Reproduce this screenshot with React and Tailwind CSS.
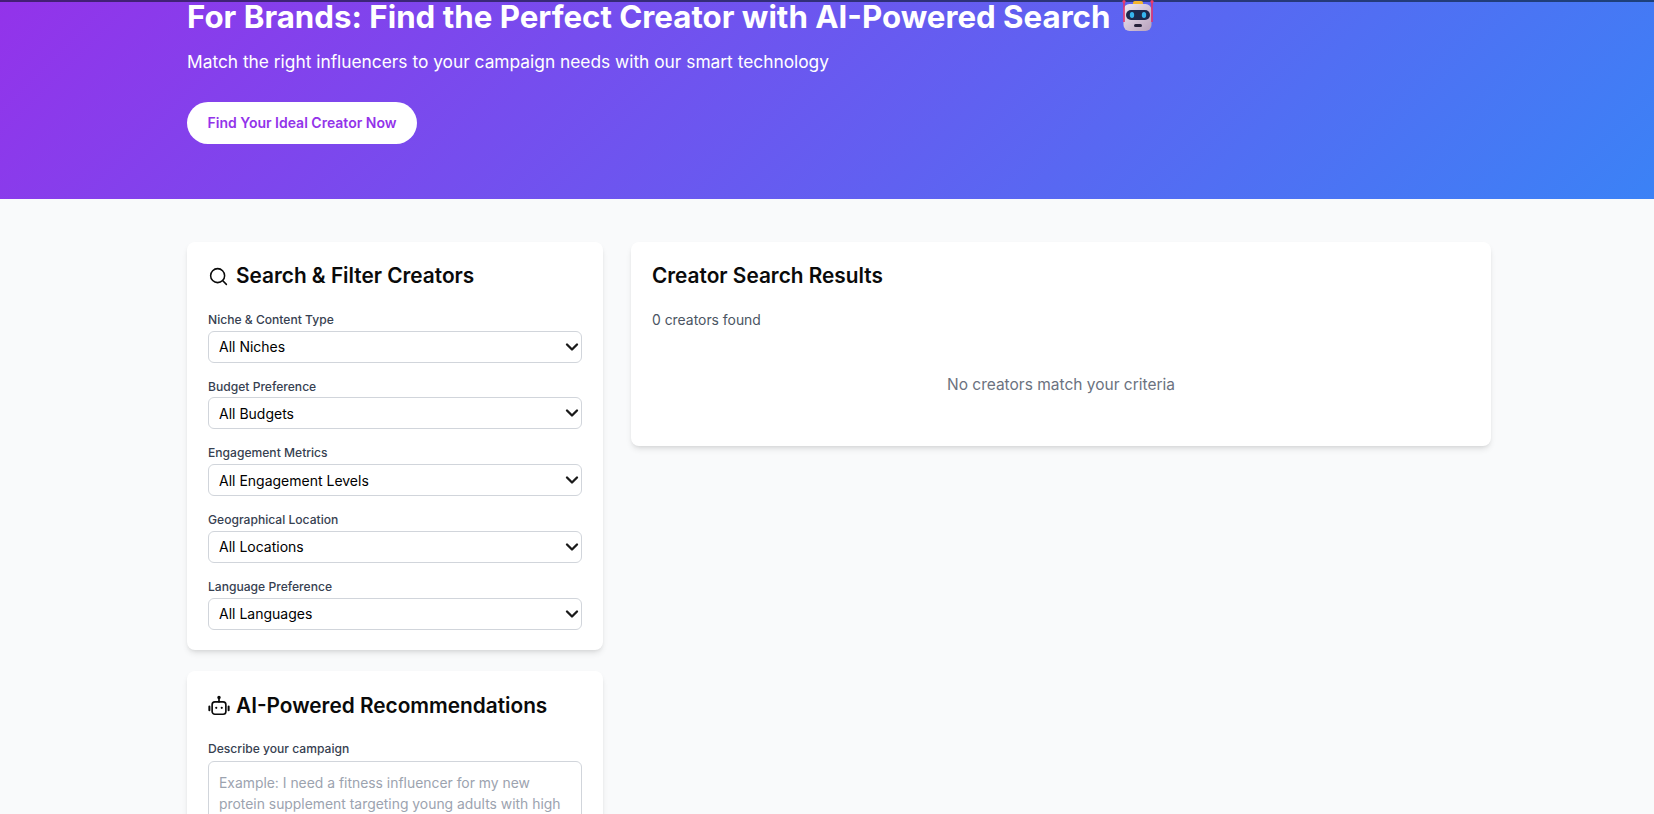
import React from 'react'
import { Search, ChevronDown } from 'lucide-react'

const filters = [
  { label: 'Niche & Content Type', value: 'All Niches' },
  { label: 'Budget Preference', value: 'All Budgets' },
  { label: 'Engagement Metrics', value: 'All Engagement Levels' },
  { label: 'Geographical Location', value: 'All Locations' },
  { label: 'Language Preference', value: 'All Languages' },
]

const RobotEmoji = () => (
  <svg viewBox="0 0 32 32" className="w-[32px] h-[32px] shrink-0 ml-[12px] -my-[1px] -translate-y-[1px]">
    <defs>
      <linearGradient id="face" x1="0" y1="0" x2="1" y2="1">
        <stop offset="0" stopColor="#efe9f4" />
        <stop offset="1" stopColor="#b7a0bb" />
      </linearGradient>
    </defs>
    <rect x="11" y="1" width="10" height="4" rx="1.8" fill="#f5b52e" />
    <rect x="1.5" y="4" width="28" height="27" rx="6" fill="url(#face)" />
    <path d="M2 2v20M30 2v20" stroke="#e0326f" strokeWidth="1.6" fill="none" />
    <circle cx="2" cy="1.6" r="1.6" fill="#ee3b6a" />
    <circle cx="30" cy="1.6" r="1.6" fill="#ee3b6a" />
    <rect x="4" y="10" width="24" height="10" rx="5" fill="#1d2a4d" />
    <ellipse cx="10" cy="15" rx="2.2" ry="3" fill="#35b6ee" />
    <ellipse cx="22" cy="15" rx="2.2" ry="3" fill="#35b6ee" />
    <rect x="12" y="24" width="8" height="3" rx="1.5" fill="#26213a" />
  </svg>
)

const RobotIcon = () => (
  <svg viewBox="0 0 24 24" fill="none" stroke="currentColor" strokeWidth="1.8" strokeLinecap="round" className="w-[22px] h-[22px] shrink-0">
    <circle cx="12" cy="2.6" r="1" />
    <path d="M12 4v3.5" />
    <rect x="4.5" y="7.5" width="15" height="13.5" rx="3" />
    <path d="M1.5 12.5v4M22.5 12.5v4" strokeWidth="2.2" />
    <circle cx="9" cy="14" r="1.2" fill="currentColor" stroke="none" />
    <circle cx="15" cy="14" r="1.2" fill="currentColor" stroke="none" />
  </svg>
)

const App = () => {
  return (
    <div className="h-[814px] overflow-hidden bg-[#f9fafb] font-['Inter',sans-serif]">
      <div className="h-[199px] pl-[187px] border-t-2 border-black/50 bg-[linear-gradient(135deg,#9333ea,#3b82f6)]">
        <h1 className="flex items-center text-[31.25px] leading-[30px] font-bold text-white">
          For Brands: Find the Perfect Creator with AI-Powered Search
          <RobotEmoji />
        </h1>
        <p className="mt-[16px] text-[17.33px] leading-[28px] text-white">
          Match the right influencers to your campaign needs with our smart technology
        </p>
        <button className="mt-[26px] w-[230px] h-[42px] pb-[2px] rounded-full bg-white text-[14px] font-semibold text-[#9333ea]">
          Find Your Ideal Creator Now
        </button>
      </div>

      <div className="pt-[43px] pl-[187px] grid grid-cols-[416px_860px] gap-[28px] items-start">
        <div className="flex flex-col gap-[21px]">
          <div className="h-[408px] bg-white rounded-lg shadow-md p-[21px]">
            <h2 className="flex items-center gap-[7px] text-[20.8px] leading-[26px] font-semibold text-[#0a0a0a]">
              <Search className="w-[21px] h-[21px]" strokeWidth={1.75} />
              Search &amp; Filter Creators
            </h2>
            <div className="mt-[21px] flex flex-col gap-[14px]">
              {filters.map((f) => (
                <div key={f.label}>
                  <label className="block text-[12.1px] leading-[20.7px] font-medium text-[#374151]">{f.label}</label>
                  <div className="relative">
                    <select className="block w-full h-[32px] pl-[10px] appearance-none border border-[#d1d5db] rounded-md bg-white text-[14px] text-black">
                      <option>{f.value}</option>
                    </select>
                    <ChevronDown className="absolute right-0 top-[6px] w-[20px] h-[20px] text-[#1a1a1a] pointer-events-none" strokeWidth={2.8} />
                  </div>
                </div>
              ))}
            </div>
          </div>

          <div className="bg-white rounded-lg shadow-md px-[21px] pt-[22px] pb-[21px]">
            <h2 className="flex items-center gap-[6px] text-[20.8px] leading-[26px] font-semibold text-[#0a0a0a]">
              <RobotIcon />
              AI-Powered Recommendations
            </h2>
            <label className="mt-[20px] block text-[12.1px] leading-[20.7px] font-medium text-[#374151]">Describe your campaign</label>
            <textarea
              rows={4}
              className="mt-[1px] block w-full px-[10px] py-[11px] border border-[#d1d5db] rounded-md text-[13.9px] leading-[21px] placeholder:text-[#9ca3af]"
              placeholder="Example: I need a fitness influencer for my new protein supplement targeting young adults with high engagement rates"
            />
          </div>
        </div>

        <div className="h-[204px] bg-white rounded-lg shadow-md p-[21px]">
          <h2 className="text-[20.8px] leading-[26px] font-semibold text-[#0a0a0a]">Creator Search Results</h2>
          <p className="mt-[21px] text-[13.9px] leading-[21px] text-[#4b5563]">0 creators found</p>
          <p className="mt-[42px] text-center text-[15.5px] leading-[24px] text-[#6b7280]">No creators match your criteria</p>
        </div>
      </div>
    </div>
  )
}

export default App
